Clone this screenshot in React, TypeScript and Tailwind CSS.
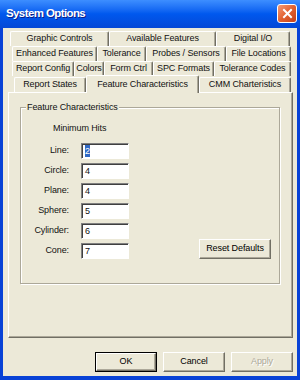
import React from 'react';

type Tab = { label: string; w: number; selected?: boolean };

const tabRows: { indent: string; tabs: Tab[] }[] = [
  {
    indent: 'ml-[2px]',
    tabs: [
      { label: 'Graphic Controls', w: 99 },
      { label: 'Available Features', w: 107 },
      { label: 'Digital I/O', w: 74 },
    ],
  },
  {
    indent: 'ml-[4px]',
    tabs: [
      { label: 'Enhanced Features', w: 85 },
      { label: 'Tolerance', w: 49 },
      { label: 'Probes / Sensors', w: 80 },
      { label: 'File Locations', w: 65 },
    ],
  },
  {
    indent: 'ml-[4px]',
    tabs: [
      { label: 'Report Config', w: 62 },
      { label: 'Colors', w: 30 },
      { label: 'Form Ctrl', w: 49 },
      { label: 'SPC Formats', w: 61 },
      { label: 'Tolerance Codes', w: 77 },
    ],
  },
  {
    indent: 'ml-[6px]',
    tabs: [
      { label: 'Report States', w: 72 },
      { label: 'Feature Characteristics', w: 113, selected: true },
      { label: 'CMM Charteristics', w: 92 },
    ],
  },
];

const hits = [
  { label: 'Line:', value: '2' },
  { label: 'Circle:', value: '4' },
  { label: 'Plane:', value: '4' },
  { label: 'Sphere:', value: '5' },
  { label: 'Cylinder:', value: '6' },
  { label: 'Cone:', value: '7' },
];

const TabButton: React.FC<{ tab: Tab }> = ({ tab }) => {
  if (tab.selected) {
    return (
      <div
        style={{ width: tab.w }}
        className="relative z-10 -mt-[2px] h-[18px] -mb-[1px] flex items-start justify-center pt-[2px] bg-[#ece9d8] border-l border-t border-white border-r border-r-[#716f64] shadow-[inset_-1px_0_0_#aca899] rounded-t-[2px] whitespace-nowrap"
      >
        {tab.label}
      </div>
    );
  }
  return (
    <div
      style={{ width: tab.w }}
      className="h-[15px] flex items-center justify-center bg-[#ece9d8] border-l border-t border-white border-r border-r-[#716f64] shadow-[inset_-1px_0_0_#aca899] rounded-t-[2px] whitespace-nowrap"
    >
      {tab.label}
    </div>
  );
};

const WinButton: React.FC<{ children: React.ReactNode; isDefault?: boolean; disabled?: boolean; className?: string }> = ({
  children,
  isDefault,
  disabled,
  className = '',
}) => (
  <div className={`${isDefault ? 'border border-black' : ''} ${className}`}>
    <div
      className={`h-full flex items-center justify-center bg-[#ece9d8] border-t border-l border-white border-b border-r border-b-[#716f64] border-r-[#716f64] shadow-[inset_-1px_-1px_0_#aca899] ${
        disabled ? 'text-[#aca899] [text-shadow:1px_1px_0_white]' : 'text-black'
      }`}
    >
      {children}
    </div>
  </div>
);

export default function App() {
  return (
    <div className="w-[300px] h-[380px] flex flex-col bg-[#0842d6] font-['Liberation_Sans',Arial,sans-serif] text-[9px] tracking-[-0.1px] text-[#111]">
      {/* Title bar */}
      <div className="h-[28px] flex items-center justify-between pl-[6px] pr-[3px] bg-gradient-to-b from-[#3d8eff] via-[#0058ee] to-[#0548d6]">
        <span className="text-white font-bold text-[11.5px] tracking-[-0.6px] [text-shadow:1px_1px_0_#0a1f8a]">
          System Options
        </span>
        <div className="w-[20px] h-[19px] mt-[-1px] rounded-[3px] border border-white bg-gradient-to-br from-[#f59a74] via-[#e2612f] to-[#c5401a] flex items-center justify-center">
          <svg width="11" height="11" viewBox="0 0 11 11">
            <path d="M2 2 L9 9 M9 2 L2 9" stroke="white" strokeWidth="2" strokeLinecap="square" />
          </svg>
        </div>
      </div>

      {/* Dialog body */}
      <div className="flex-1 mx-[3px] mb-[4px] bg-[#ece9d8] flex flex-col pt-[3px] pl-[5px] pr-[4px] pb-[4px]">
        {/* Tabs */}
        <div className="flex flex-col">
          {tabRows.map((row, i) => (
            <div key={i} className={`flex ${row.indent} ${i === 3 ? 'h-[16px] items-end' : 'h-[15px]'}`}>
              {row.tabs.map(t => (
                <TabButton key={t.label} tab={t} />
              ))}
            </div>
          ))}
        </div>

        {/* Tab page */}
        <div className="h-[246px] border-t border-l border-white border-r border-b border-r-[#716f64] border-b-[#716f64] shadow-[inset_-1px_-1px_0_#aca899] pt-[14px] pl-[11px] pr-[12px]">
          {/* Group box */}
          <div className="relative h-[177px] border border-[#aca899] shadow-[inset_1px_1px_0_white,1px_1px_0_white]">
            <span className="absolute left-[5px] -top-[7px] px-[1px] bg-[#ece9d8] leading-[12px]">Feature Characteristics</span>
            <div className="pl-[32px] pt-[14px] leading-[13px]">Minimum Hits</div>
            <div className="flex items-end mt-[8px]">
              <div className="flex flex-col gap-[4px]">
                {hits.map((h, i) => (
                  <div key={h.label} className="flex items-center h-[16px]">
                    <span className="w-[48px] text-right">{h.label}</span>
                    <div className="ml-[12px] w-[48px] h-[16px] bg-white border-t border-l border-[#808080] border-r border-b border-r-white border-b-white shadow-[inset_1px_1px_0_#404040] flex items-center pl-[3px]">
                      {i === 0 ? (
                        <span className="bg-[#316ac5] text-white leading-[12px]">{h.value}</span>
                      ) : (
                        <span className="leading-[12px]">{h.value}</span>
                      )}
                    </div>
                  </div>
                ))}
              </div>
              <div className="flex-1" />
              <WinButton className="w-[72px] h-[20px] mr-[8px]">Reset Defaults</WinButton>
            </div>
          </div>
        </div>

        {/* Dialog buttons */}
        <div className="flex justify-end gap-[6px] mt-[14px] h-[20px]">
          <WinButton isDefault className="w-[62px] h-[20px]">OK</WinButton>
          <WinButton className="w-[62px] h-[20px]">Cancel</WinButton>
          <WinButton disabled className="w-[62px] h-[20px]">Apply</WinButton>
        </div>
      </div>
    </div>
  );
}
